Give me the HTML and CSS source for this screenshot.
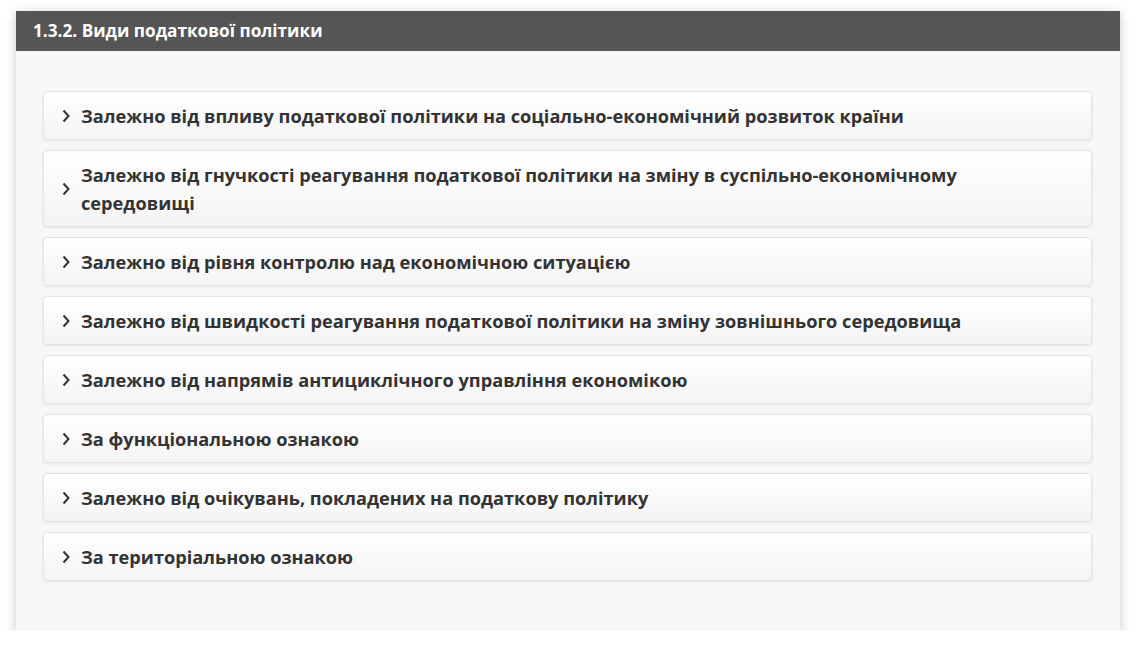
FILE: index.html
```html
<!DOCTYPE html>
<html lang="uk">
<head>
<meta charset="utf-8">
<title>1.3.2. Види податкової політики</title>
<link rel="stylesheet" href="styles.css">
</head>
<body>
<section class="card">
  <header class="card-head">1.3.2. Види податкової політики</header>
  <div class="card-body">
    <div class="item"><svg class="chev" viewBox="0 0 8 14"><path d="M1.5 1.5 L6.5 7 L1.5 12.5"/></svg><span class="label">Залежно від впливу податкової політики на соціально-економічний розвиток країни</span></div>
    <div class="item"><svg class="chev" viewBox="0 0 8 14"><path d="M1.5 1.5 L6.5 7 L1.5 12.5"/></svg><span class="label">Залежно від гнучкості реагування податкової політики на зміну в суспільно-економічному середовищі</span></div>
    <div class="item"><svg class="chev" viewBox="0 0 8 14"><path d="M1.5 1.5 L6.5 7 L1.5 12.5"/></svg><span class="label">Залежно від рівня контролю над економічною ситуацією</span></div>
    <div class="item"><svg class="chev" viewBox="0 0 8 14"><path d="M1.5 1.5 L6.5 7 L1.5 12.5"/></svg><span class="label">Залежно від швидкості реагування податкової політики на зміну зовнішнього середовища</span></div>
    <div class="item"><svg class="chev" viewBox="0 0 8 14"><path d="M1.5 1.5 L6.5 7 L1.5 12.5"/></svg><span class="label">Залежно від напрямів антициклічного управління економікою</span></div>
    <div class="item"><svg class="chev" viewBox="0 0 8 14"><path d="M1.5 1.5 L6.5 7 L1.5 12.5"/></svg><span class="label">За функціональною ознакою</span></div>
    <div class="item"><svg class="chev" viewBox="0 0 8 14"><path d="M1.5 1.5 L6.5 7 L1.5 12.5"/></svg><span class="label">Залежно від очікувань, покладених на податкову політику</span></div>
    <div class="item"><svg class="chev" viewBox="0 0 8 14"><path d="M1.5 1.5 L6.5 7 L1.5 12.5"/></svg><span class="label">За територіальною ознакою</span></div>
  </div>
</section>
</body>
</html>
```

FILE: styles.css
```css
html, body {
  margin: 0;
  padding: 0;
  background: #ffffff;
}
body {
  padding: 11px 16px 0 16px;
  font-family: "Open Sans", "Noto Sans", sans-serif;
  color: #333333;
}
.card {
  width: 1104px;
  background: #f7f7f7;
  box-shadow: 0 2px 10px rgba(0, 0, 0, 0.22);
}
.card-head {
  height: 40px;
  box-sizing: border-box;
  background: #555555;
  color: #ffffff;
  font-weight: 700;
  font-size: 17.2px;
  line-height: 40px;
  padding-left: 17px;
}
.card-body {
  display: flex;
  flex-direction: column;
  gap: 10px;
  padding: 40px 28px 50px 27px;
}
.item {
  display: flex;
  align-items: center;
  gap: 11px;
  padding: 10px 40px 9px 18px;
  border: 1px solid #e3e3e3;
  border-radius: 4px;
  background: linear-gradient(to bottom, #ffffff 0%, #f4f4f4 100%);
  box-shadow: 0 1px 3px rgba(0, 0, 0, 0.08);
}
.chev {
  flex: none;
  width: 8px;
  height: 14px;
  fill: none;
  stroke: #333333;
  stroke-width: 2;
}
.label {
  font-weight: 700;
  font-size: 18.2px;
  line-height: 28px;
  color: #333333;
}
```
